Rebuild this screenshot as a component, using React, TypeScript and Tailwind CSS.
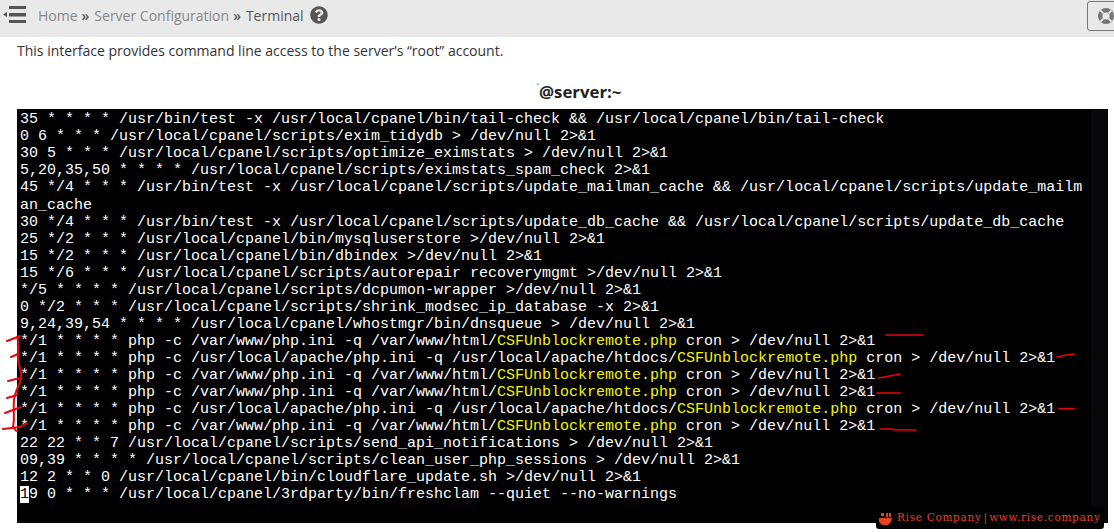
import { FaQuestionCircle } from "react-icons/fa";

const LINES: { text: string; hl?: [string, string] }[] = [
  { text: "35 * * * * /usr/bin/test -x /usr/local/cpanel/bin/tail-check && /usr/local/cpanel/bin/tail-check" },
  { text: "0 6 * * * /usr/local/cpanel/scripts/exim_tidydb > /dev/null 2>&1" },
  { text: "30 5 * * * /usr/local/cpanel/scripts/optimize_eximstats > /dev/null 2>&1" },
  { text: "5,20,35,50 * * * * /usr/local/cpanel/scripts/eximstats_spam_check 2>&1" },
  { text: "45 */4 * * * /usr/bin/test -x /usr/local/cpanel/scripts/update_mailman_cache && /usr/local/cpanel/scripts/update_mailm" },
  { text: "an_cache" },
  { text: "30 */4 * * * /usr/bin/test -x /usr/local/cpanel/scripts/update_db_cache && /usr/local/cpanel/scripts/update_db_cache" },
  { text: "25 */2 * * * /usr/local/cpanel/bin/mysqluserstore >/dev/null 2>&1" },
  { text: "15 */2 * * * /usr/local/cpanel/bin/dbindex >/dev/null 2>&1" },
  { text: "15 */6 * * * /usr/local/cpanel/scripts/autorepair recoverymgmt >/dev/null 2>&1" },
  { text: "*/5 * * * * /usr/local/cpanel/scripts/dcpumon-wrapper >/dev/null 2>&1" },
  { text: "0 */2 * * * /usr/local/cpanel/scripts/shrink_modsec_ip_database -x 2>&1" },
  { text: "9,24,39,54 * * * * /usr/local/cpanel/whostmgr/bin/dnsqueue > /dev/null 2>&1" },
  { text: "*/1 * * * * php -c /var/www/php.ini -q /var/www/html/", hl: ["CSFUnblockremote.php", " cron > /dev/null 2>&1"] },
  { text: "*/1 * * * * php -c /usr/local/apache/php.ini -q /usr/local/apache/htdocs/", hl: ["CSFUnblockremote.php", " cron > /dev/null 2>&1"] },
  { text: "*/1 * * * * php -c /var/www/php.ini -q /var/www/html/", hl: ["CSFUnblockremote.php", " cron > /dev/null 2>&1"] },
  { text: "*/1 * * * * php -c /var/www/php.ini -q /var/www/html/", hl: ["CSFUnblockremote.php", " cron > /dev/null 2>&1"] },
  { text: "*/1 * * * * php -c /usr/local/apache/php.ini -q /usr/local/apache/htdocs/", hl: ["CSFUnblockremote.php", " cron > /dev/null 2>&1"] },
  { text: "*/1 * * * * php -c /var/www/php.ini -q /var/www/html/", hl: ["CSFUnblockremote.php", " cron > /dev/null 2>&1"] },
  { text: "22 22 * * 7 /usr/local/cpanel/scripts/send_api_notifications > /dev/null 2>&1" },
  { text: "09,39 * * * * /usr/local/cpanel/scripts/clean_user_php_sessions > /dev/null 2>&1" },
  { text: "12 2 * * 0 /usr/local/cpanel/bin/cloudflare_update.sh >/dev/null 2>&1" },
];

const MARKS = [
  "M17 337 C20 345 17 350 18 358 C18 366 23 372 21 379 C18 388 15 392 14 400 C13 410 15 418 13 427 C16 428 14 431 17 431",
  "M7 341 L20 336",
  "M11 357 L18 354",
  "M8 381 L20 378",
  "M7 398 L17 395",
  "M5 413 L21 407",
  "M3 429 L20 427 L27 423",
  "M886 335 L923 335",
  "M1057 357 L1066 355 L1074 354",
  "M879 378 L900 374",
  "M877 393 L900 393",
  "M1059 408.5 L1074 408.5",
  "M880 429 L893 429 L895 430 L916 430",
];

function TerminalBody() {
  return (
    <div className="bg-black ml-[17px] mr-[6px] h-[414px] mt-[10px] pl-[3px] pt-[2.3px] flex font-['Liberation_Mono',monospace] text-[15px] leading-[17.05px] text-white whitespace-pre">
      <div className="flex-1">
        {LINES.map((line, idx) => (
          <div key={idx} className="h-[17.05px]">
            {line.text}
            {line.hl && (
              <>
                <span className="text-[#f5f500]">{line.hl[0]}</span>
                {line.hl[1]}
              </>
            )}
          </div>
        ))}
        <div className="h-[17.05px]">
          <span className="bg-white text-black">1</span>9 0 * * * /usr/local/cpanel/3rdparty/bin/freshclam --quiet --no-warnings
        </div>
      </div>
      <div className="w-[17px] mt-[-2.3px] bg-[#08080b]" />
    </div>
  );
}

export default function App() {
  return (
    <div className="relative w-[1114px] h-[532px] overflow-hidden bg-white font-['Open_Sans',sans-serif]">
      <div className="h-[37px] bg-[#e9e9e9] flex items-start">
        <svg width="26" height="24" viewBox="0 0 26 24" className="ml-px shrink-0">
          <path d="M2 14.5 L6 12 L6 17 Z" fill="#555" />
          <rect x="8" y="6" width="17" height="3" fill="#555" />
          <rect x="8" y="13" width="17" height="3.5" fill="#555" />
          <rect x="8" y="20" width="17" height="3" fill="#555" />
        </svg>
        <div className="ml-[11px] mt-[5px] h-[20px] flex items-center text-[14px] text-[#888]">
          <span>Home</span>
          <span className="ml-1 text-[#555] font-semibold">»</span>
          <span className="ml-[5px]">Server Configuration</span>
          <span className="ml-1 text-[#555] font-semibold">»</span>
          <span className="ml-[5px] text-[#555]">Terminal</span>
          <FaQuestionCircle className="ml-[6px] text-[#555]" size={18} />
        </div>
        <div className="ml-auto mt-px mr-[-6px] w-[33px] h-[30px] border border-[#777] rounded-[3px] flex items-center pl-[10px]">
          <svg width="16" height="16" viewBox="0 0 16 16">
            <circle cx="8" cy="8" r="8" fill="#777" />
            <circle cx="8" cy="8" r="3.6" fill="#e9e9e9" />
            <path d="M2.4 2.4 L5.4 5.4 M13.6 2.4 L10.6 5.4 M2.4 13.6 L5.4 10.6 M13.6 13.6 L10.6 10.6" stroke="#e9e9e9" strokeWidth="1.8" />
          </svg>
        </div>
      </div>
      <p className="ml-[17px] mt-[4px] text-[14px] leading-[19px] text-[#333]">
        This interface provides command line access to the server’s “root” account.
      </p>
      <div className="mt-[17px] h-[22px] text-center text-[16.8px] leading-[22px] font-bold text-[#222] pl-[44px]">
        <span className="text-[9px] font-normal align-super">`</span>@server:~
      </div>
      <TerminalBody />

      {/* red pen marks drawn over the screenshot */}
      <svg className="absolute inset-0 pointer-events-none" width="1114" height="532" viewBox="0 0 1114 532" fill="none">
        {MARKS.map((d, idx) => (
          <path key={idx} d={d} stroke="#e8060c" strokeWidth={idx < 7 ? 2 : 1.7} strokeLinecap="round" strokeLinejoin="round" />
        ))}
      </svg>

      {/* watermark */}
      <div className="absolute left-[876px] top-[507px] w-[228px] h-[22px] bg-black rounded-[3px] flex items-center pl-[2px] text-[#e8401c] font-['DejaVu_Serif',serif] text-[10.5px] font-medium whitespace-nowrap">
        <svg width="15" height="15" viewBox="0 0 15 15" className="shrink-0">
          <path d="M1 7 L14 7 L13 11 L10 14 L4 14 L1 11 Z M3 2 H6 V5 H3 Z M8 2 H10 V6 H8 Z M11 2 H13 V6 H11 Z" fill="#e8401c" />
        </svg>
        <span className="ml-[4px] tracking-[0.7px]">Rise Company</span>
        <span className="ml-[2px] mr-[2px]">|</span>
        <span className="tracking-[0.7px]">www.rise.company</span>
      </div>
    </div>
  );
}
